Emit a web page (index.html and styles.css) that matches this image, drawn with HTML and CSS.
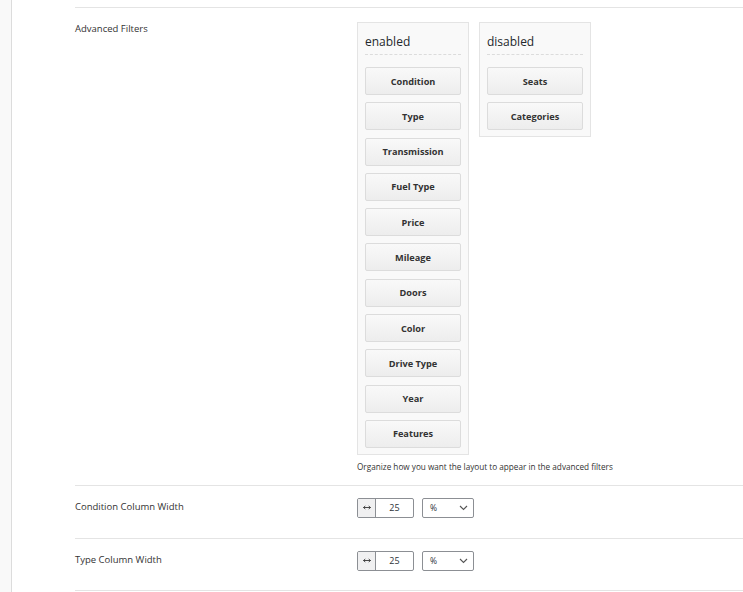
FILE: index.html
```html
<!DOCTYPE html>
<html>
<head>
<meta charset="utf-8">
<link rel="stylesheet" href="styles.css">
</head>
<body>
<div class="page">
  <div class="sidebar"></div>
  <div class="main">
    <div class="rows">
      <div class="row row-filters">
        <div class="label">Advanced Filters</div>
        <div class="field">
          <div class="boxes">
            <div class="box">
              <div class="box-title">enabled</div>
              <div class="items">
                <div class="item">Condition</div>
                <div class="item">Type</div>
                <div class="item">Transmission</div>
                <div class="item">Fuel Type</div>
                <div class="item">Price</div>
                <div class="item">Mileage</div>
                <div class="item">Doors</div>
                <div class="item">Color</div>
                <div class="item">Drive Type</div>
                <div class="item">Year</div>
                <div class="item">Features</div>
              </div>
            </div>
            <div class="box">
              <div class="box-title">disabled</div>
              <div class="items">
                <div class="item">Seats</div>
                <div class="item">Categories</div>
              </div>
            </div>
          </div>
          <div class="help">Organize how you want the layout to appear in the advanced filters</div>
        </div>
      </div>
      <div class="row row-width">
        <div class="label">Condition Column Width</div>
        <div class="field controls">
          <div class="input-group">
            <span class="addon"><svg width="8" height="5" viewBox="0 0 8 5"><path d="M0.5 2.5 H7.5 M0.5 2.5 L2.3 1 M0.5 2.5 L2.3 4 M7.5 2.5 L5.7 1 M7.5 2.5 L5.7 4" fill="none" stroke="#333" stroke-width="0.9"/></svg></span>
            <span class="num">25</span>
          </div>
          <div class="select">
            <span>%</span>
            <svg class="chev" width="9" height="6" viewBox="0 0 9 6"><path d="M1 1 L4.5 4.5 L8 1" fill="none" stroke="#555" stroke-width="1.1"/></svg>
          </div>
        </div>
      </div>
      <div class="row row-width row-last">
        <div class="label">Type Column Width</div>
        <div class="field controls">
          <div class="input-group">
            <span class="addon"><svg width="8" height="5" viewBox="0 0 8 5"><path d="M0.5 2.5 H7.5 M0.5 2.5 L2.3 1 M0.5 2.5 L2.3 4 M7.5 2.5 L5.7 1 M7.5 2.5 L5.7 4" fill="none" stroke="#333" stroke-width="0.9"/></svg></span>
            <span class="num">25</span>
          </div>
          <div class="select">
            <span>%</span>
            <svg class="chev" width="9" height="6" viewBox="0 0 9 6"><path d="M1 1 L4.5 4.5 L8 1" fill="none" stroke="#555" stroke-width="1.1"/></svg>
          </div>
        </div>
      </div>
    </div>
  </div>
</div>
</body>
</html>
```
FILE: styles.css
```css
html, body {
  margin: 0;
  padding: 0;
  background: #fff;
}
body {
  font-family: "Open Sans", "Noto Sans", sans-serif;
  color: #23282d;
  width: 743px;
  height: 592px;
  overflow: hidden;
}
.page {
  display: flex;
  height: 592px;
}
.sidebar {
  width: 11px;
  background: #f9f9f9;
  border-right: 1px solid #dcdcdc;
  flex: none;
}
.main {
  flex: 1;
  padding-left: 63px;
  padding-top: 7px;
}
.rows {
  border-top: 1px solid #e4e4e4;
}
.row {
  display: flex;
  border-bottom: 1px solid #e4e4e4;
}
.label {
  width: 282px;
  flex: none;
  font-size: 9.5px;
  color: #333;
}
.row-filters {
  padding-top: 14px;
  padding-bottom: 13px;
}
.boxes {
  display: flex;
  gap: 10px;
  align-items: flex-start;
}
.box {
  width: 112px;
  background: #f9f9f9;
  border: 1px solid #e4e4e4;
  padding: 0 7px 6px 7px;
  box-sizing: border-box;
}
.box-title {
  font-size: 12px;
  color: #23282d;
  height: 32px;
  line-height: 1;
  padding-top: 13px;
  box-sizing: border-box;
  border-bottom: 1px dashed #dcdcdc;
}
.items {
  display: flex;
  flex-direction: column;
  gap: 7.3px;
  padding-top: 12px;
}
.item {
  height: 28px;
  box-sizing: border-box;
  border: 1px solid #dcdcdc;
  border-radius: 2px;
  background: linear-gradient(#f9f9f9, #ededed);
  font-size: 9.2px;
  font-weight: 700;
  color: #333;
  display: flex;
  align-items: center;
  justify-content: center;
}
.help {
  font-size: 8.2px;
  color: #333;
  margin-top: 6px;
}
.row-width {
  height: 53px;
  box-sizing: border-box;
  padding-top: 12px;
}
.row-last {
  height: 52px;
}
.row-width .label {
  padding-top: 2px;
}
.controls {
  display: flex;
  gap: 8px;
  align-items: flex-start;
}
.input-group {
  display: flex;
  height: 20px;
  border: 1px solid #8c8f94;
  border-radius: 2px;
  box-sizing: border-box;
  overflow: hidden;
}
.addon {
  width: 17px;
  background: #f0f0f1;
  border-right: 1px solid #8c8f94;
  display: flex;
  align-items: center;
  justify-content: center;
}
.addon svg {
  display: block;
}
.num {
  width: 37px;
  font-size: 9px;
  color: #2c3338;
  display: flex;
  align-items: center;
  justify-content: center;
}
.select {
  width: 52px;
  height: 20px;
  border: 1px solid #8c8f94;
  border-radius: 2px;
  box-sizing: border-box;
  display: flex;
  align-items: center;
  justify-content: space-between;
  padding: 0 5px 0 7px;
  font-size: 8.5px;
  color: #2c3338;
}
.chev {
  display: block;
}
```
